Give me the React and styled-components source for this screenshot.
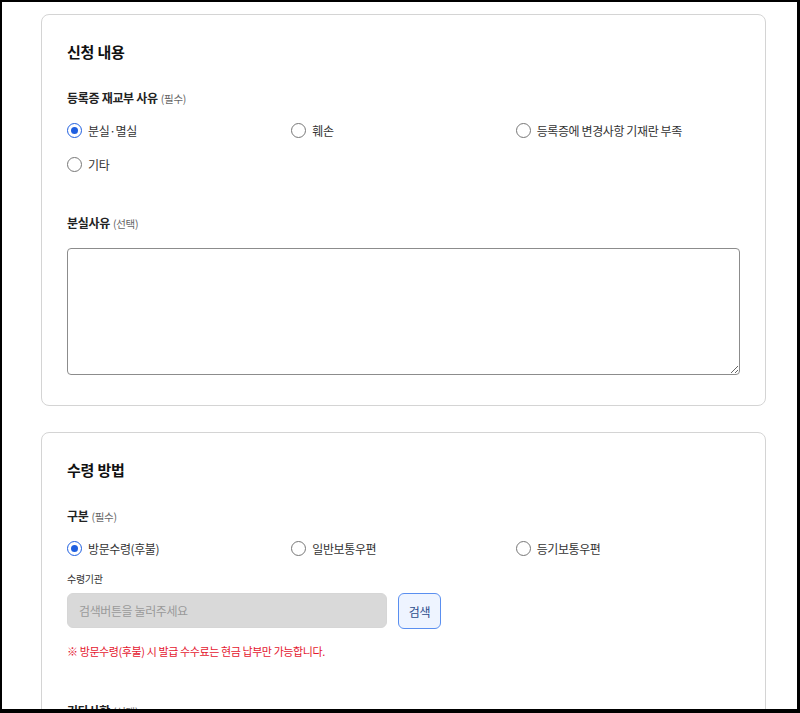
import React, { useState } from 'react';
import styled, { createGlobalStyle } from 'styled-components';

const GlobalStyle = createGlobalStyle`
  html, body {
    margin: 0;
    padding: 0;
    background: #fff;
  }
  body {
    font-family: "Noto Sans CJK KR", "Noto Sans", sans-serif;
    color: #222;
  }
`;

const Frame = styled.div`
  box-sizing: border-box;
  height: 713px;
  overflow: hidden;
  border-style: solid;
  border-color: #000;
  border-width: 2px 3px 4px 2px;
  background: #fff;
  padding: 12px 31px 0 39px;
  display: flex;
  flex-direction: column;
  gap: 26px;
`;

const Card = styled.section`
  border: 1px solid #d4d4d4;
  border-radius: 8px;
  padding: 26px 25px 30px 25px;
  flex-shrink: 0;
`;

const Title = styled.h2`
  margin: 0 0 26px;
  font-size: 15px;
  font-weight: 700;
  letter-spacing: -0.2px;
  line-height: 22px;
  color: #111;
`;

const Label = styled.div`
  font-size: 12px;
  font-weight: 700;
  letter-spacing: -0.3px;
  line-height: 18px;
  color: #222;
  margin-bottom: ${({ gap }) => gap || 13}px;
  span {
    font-size: 10.5px;
    font-weight: 400;
    color: #666;
    letter-spacing: -0.3px;
    margin-left: 3px;
  }
`;

const RadioGrid = styled.div`
  display: grid;
  grid-template-columns: repeat(3, 1fr);
  row-gap: 16px;
`;

const RadioItem = styled.label`
  display: flex;
  align-items: center;
  gap: 6px;
  height: 18px;
  font-size: 12px;
  letter-spacing: -0.4px;
  color: #333;
  cursor: pointer;
`;

const Circle = styled.span`
  box-sizing: border-box;
  width: 15px;
  height: 15px;
  border-radius: 50%;
  border: 1.5px solid ${({ checked }) => (checked ? '#1f5fe0' : '#777')};
  display: flex;
  align-items: center;
  justify-content: center;
  flex-shrink: 0;
  &::after {
    content: '';
    width: 7px;
    height: 7px;
    border-radius: 50%;
    background: #1f5fe0;
    display: ${({ checked }) => (checked ? 'block' : 'none')};
  }
`;

const Field = styled.div`
  margin-top: ${({ top }) => top}px;
`;

const TextArea = styled.textarea`
  display: block;
  box-sizing: border-box;
  width: 100%;
  height: 127px;
  border: 1px solid #8c8c8c;
  border-radius: 4px;
  font-family: inherit;
  font-size: 13px;
  padding: 8px;
  resize: vertical;
`;

const SmallLabel = styled.div`
  font-size: 10px;
  letter-spacing: -0.3px;
  color: #333;
  margin: 15px 0 7px;
  line-height: 14px;
`;

const SearchRow = styled.div`
  display: flex;
  gap: 11px;
`;

const SearchInput = styled.input`
  box-sizing: border-box;
  width: 320px;
  height: 35px;
  border: 1px solid #d6d6d6;
  border-radius: 6px;
  background: #d9d9d9;
  padding: 0 11px;
  font-family: inherit;
  font-size: 12px;
  letter-spacing: -0.4px;
  &::placeholder {
    color: #9a9a9a;
  }
`;

const SearchButton = styled.button`
  box-sizing: border-box;
  width: 43px;
  height: 36px;
  border: 1.5px solid #5a8ff0;
  border-radius: 6px;
  background: #eef4ff;
  color: #2b4c8c;
  font-family: inherit;
  font-size: 12px;
  letter-spacing: -0.3px;
  cursor: pointer;
`;

const Notice = styled.p`
  margin: 14px 0 0;
  font-size: 11px;
  letter-spacing: -0.4px;
  color: #e4172f;
  line-height: 16px;
`;

const RadioGroup = ({ options, value, onChange }) => (
  <RadioGrid>
    {options.map((opt) => (
      <RadioItem key={opt} onClick={() => onChange(opt)}>
        <Circle checked={value === opt} />
        {opt}
      </RadioItem>
    ))}
  </RadioGrid>
);

const App = () => {
  const [reason, setReason] = useState('분실·멸실');
  const [method, setMethod] = useState('방문수령(후불)');

  return (
    <>
      <GlobalStyle />
      <Frame>
        <Card>
          <Title>신청 내용</Title>
          <Label>
            등록증 재교부 사유<span>(필수)</span>
          </Label>
          <RadioGroup
            options={['분실·멸실', '훼손', '등록증에 변경사항 기재란 부족', '기타']}
            value={reason}
            onChange={setReason}
          />
          <Field top={41}>
            <Label gap={15}>
              분실사유<span>(선택)</span>
            </Label>
            <TextArea />
          </Field>
        </Card>
        <Card>
          <Title>수령 방법</Title>
          <Label>
            구분<span>(필수)</span>
          </Label>
          <RadioGroup
            options={['방문수령(후불)', '일반보통우편', '등기보통우편']}
            value={method}
            onChange={setMethod}
          />
          <SmallLabel>수령기관</SmallLabel>
          <SearchRow>
            <SearchInput placeholder="검색버튼을 눌러주세요" disabled />
            <SearchButton>검색</SearchButton>
          </SearchRow>
          <Notice>※ 방문수령(후불) 시 발급 수수료는 현금 납부만 가능합니다.</Notice>
          <Field top={43}>
            <Label>
              기타사항<span>(선택)</span>
            </Label>
          </Field>
        </Card>
      </Frame>
    </>
  );
};

export default App;
